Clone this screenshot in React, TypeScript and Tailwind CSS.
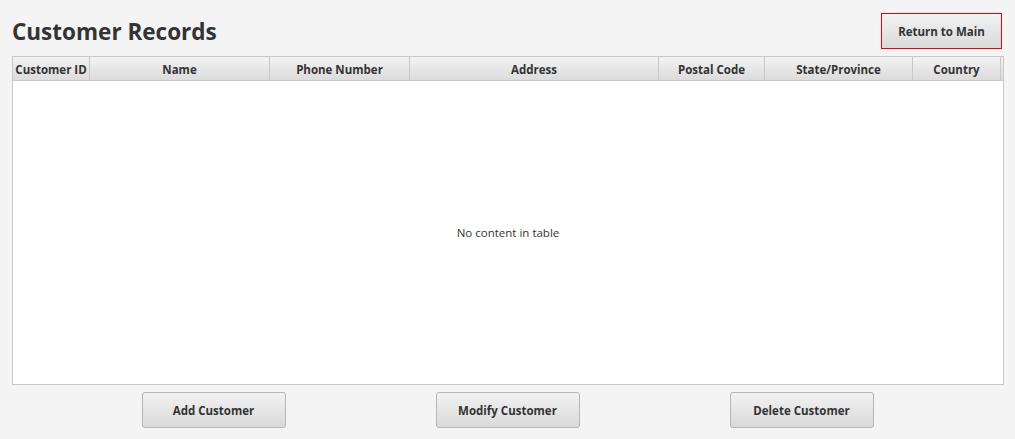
import React from "react";

const columns = [
  { label: "Customer ID", width: 77 },
  { label: "Name", width: 180 },
  { label: "Phone Number", width: 140 },
  { label: "Address", width: 249 },
  { label: "Postal Code", width: 106 },
  { label: "State/Province", width: 148 },
  { label: "Country", width: 88 },
];

const btn =
  "h-[36px] w-[144px] pt-[2px] rounded-[3px] border border-[#b5b5b5] bg-gradient-to-b from-[#f2f2f2] to-[#dadada] text-[11.5px] font-bold text-[#333333]";

export default function App() {
  return (
    <div
      className="w-[1015px] h-[439px] bg-[#f4f4f4] pl-[12px] pr-[11px] pt-[13px] overflow-hidden"
      style={{ fontFamily: '"Open Sans", "Noto Sans", sans-serif' }}
    >
      <div className="flex items-start justify-between h-[36px]">
        <h1 className="mt-[3px] text-[22.5px] leading-[32px] font-bold text-[#333333]">
          Customer Records
        </h1>
        <button className="mr-[2px] h-[36px] w-[121px] pt-[2px] border border-[#f00000] bg-gradient-to-b from-[#f2f2f2] to-[#dadada] text-[11.5px] font-bold text-[#333333]">
          Return to Main
        </button>
      </div>

      <div className="mt-[7px] h-[329px] border border-[#c8c8c8] bg-white flex flex-col">
        <div className="flex h-[24px] border-b border-[#c8c8c8] bg-gradient-to-b from-[#f2f2f2] to-[#dcdcdc]">
          {columns.map((c) => (
            <div
              key={c.label}
              className="shrink-0 flex items-center justify-center pt-[2px] border-r border-[#c8c8c8] text-[11.5px] font-bold text-[#333333] whitespace-nowrap overflow-hidden"
              style={{ width: c.width }}
            >
              {c.label}
            </div>
          ))}
          <div className="flex-1" />
        </div>
        <div className="flex-1 flex items-center justify-center pt-[1px] text-[11.5px] text-[#333333]">
          No content in table
        </div>
      </div>

      <div className="mt-[7px] flex justify-center gap-[150px] pr-[1px]">
        <button className={btn}>Add Customer</button>
        <button className={btn}>Modify Customer</button>
        <button className={btn}>Delete Customer</button>
      </div>
    </div>
  );
}
